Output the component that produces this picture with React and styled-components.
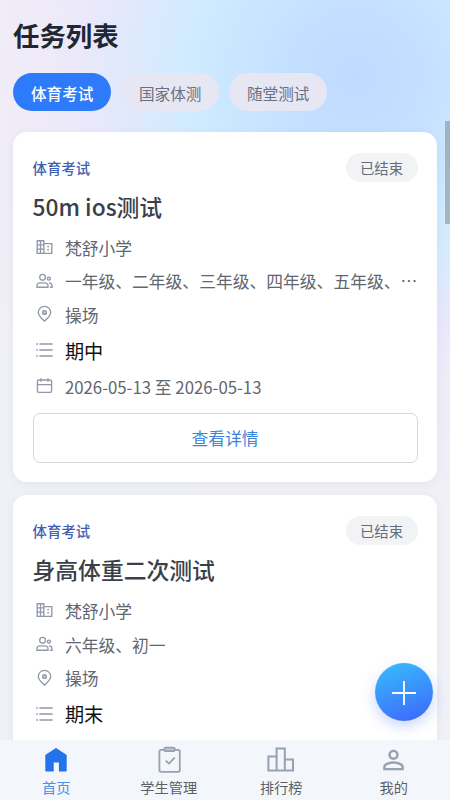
import styled, { createGlobalStyle } from "styled-components";
import { MdPersonOutline } from "react-icons/md";

const tabs = ["体育考试", "国家体测", "随堂测试"];

const tasks = [
  {
    id: 1,
    category: "体育考试",
    status: "已结束",
    title: "50m ios测试",
    school: "梵舒小学",
    grades: "一年级、二年级、三年级、四年级、五年级、…",
    place: "操场",
    period: "期中",
    date: "2026-05-13 至 2026-05-13",
  },
  {
    id: 2,
    category: "体育考试",
    status: "已结束",
    title: "身高体重二次测试",
    school: "梵舒小学",
    grades: "六年级、初一",
    place: "操场",
    period: "期末",
    date: "2026-05-13 至 2026-05-13",
  },
];

const SchoolIcon = () => (
  <LineIcon viewBox="0 0 19 18">
    <path d="M2.2 2.7h6.6v12.6H2.2zM8.8 5.6h8v9.7h-8M5.5 2.7v12.6M2.2 6.9h6.6M2.2 11.1h6.6" />
    <path d="M12.2 8.6h1.8M12.2 11.8h1.8" />
  </LineIcon>
);

const PeopleIcon = () => (
  <LineIcon viewBox="0 0 19 18">
    <circle cx="7.6" cy="5.3" r="2.9" />
    <path d="M2 15.2v-1.4c0-2 1.5-3 3.4-3h4.2c2 0 3.4 1 3.4 3v1.4z" />
    <circle cx="13.9" cy="6.6" r="1.5" />
    <path d="M14 10.9c1.9.2 3 1.2 3 2.9v1.4h-2" />
  </LineIcon>
);

const PinIcon = () => (
  <LineIcon viewBox="0 0 19 18">
    <path d="M9.5 16.2C6.2 13.2 3.3 10.6 3.3 7.5a6.2 6.2 0 0 1 12.4 0c0 3.1-2.9 5.7-6.2 8.7z" />
    <circle cx="9.5" cy="7.5" r="1.9" fill="#c9cdd6" />
  </LineIcon>
);

const ListIcon = () => (
  <LineIcon viewBox="0 0 19 18">
    <path d="M1.2 3h1.6M4.4 3h13.2M1.2 9h1.6M4.4 9h13.2M1.2 15h1.6M4.4 15h13.2" />
  </LineIcon>
);

const CalendarIcon = () => (
  <LineIcon viewBox="0 0 19 18">
    <rect x="2.4" y="3" width="14.2" height="12.4" rx="1.6" />
    <path d="M2.4 7.6h14.2M5.9 1.3v3.4M13 1.3v3.4" />
  </LineIcon>
);

const HomeIcon = () => (
  <svg width="32" height="32" viewBox="0 0 32 32" fill="#2173ec">
    <path d="M16 4 26 10.4a1.4 1.4 0 0 1 .7 1.2v15a.9.9 0 0 1-.9.9h-6.9v-9h-5.2v9H6.2a.9.9 0 0 1-.9-.9v-15a1.4 1.4 0 0 1 .7-1.2z" />
  </svg>
);

const ClipboardIcon = () => (
  <svg width="32" height="32" viewBox="0 0 32 32" fill="none" stroke="#98a1b3" strokeWidth="1.8">
    <rect x="6.4" y="5.8" width="20.4" height="22" rx="1.8" />
    <rect x="11.4" y="3.6" width="10.4" height="3.6" rx="1.4" fill="#c3c9d4" />
    <path d="m12.8 16.8 3.2 2.8 5.8-6" />
  </svg>
);

const RankIcon = () => (
  <svg width="32" height="32" viewBox="0 0 32 32" fill="none" stroke="#98a1b3" strokeWidth="2">
    <path d="M3.4 12.6h8.2v14H3.4zM11.6 4.6h8.2v22h-8.2zM19.8 15.6h8.2v11h-8.2z" />
  </svg>
);

const TaskCard = ({ task }) => {
  return (
    <Card>
      <CardHead>
        <Category>{task.category}</Category>
        <Status>{task.status}</Status>
      </CardHead>
      <TaskTitle>{task.title}</TaskTitle>
      <Info>
        <SchoolIcon />
        <span>{task.school}</span>
      </Info>
      <Info>
        <PeopleIcon />
        <span>{task.grades}</span>
      </Info>
      <Info>
        <PinIcon />
        <span>{task.place}</span>
      </Info>
      <Info $large>
        <ListIcon />
        <span>{task.period}</span>
      </Info>
      <Info>
        <CalendarIcon />
        <span>{task.date}</span>
      </Info>
      <DetailButton>查看详情</DetailButton>
    </Card>
  );
};

const App = () => {
  return (
    <>
      <GlobalStyle />
      <Page lang="zh-CN">
        <Content>
          <Heading>任务列表</Heading>
          <Tabs>
            {tabs.map((tab, index) => (
              <Tab key={tab} $active={index === 0}>
                {tab}
              </Tab>
            ))}
          </Tabs>
          <TaskList>
            {tasks.map((task) => (
              <TaskCard key={task.id} task={task} />
            ))}
          </TaskList>
        </Content>
        <NavBar>
          <NavItem $active>
            <HomeIcon />
            <span>首页</span>
          </NavItem>
          <NavItem>
            <ClipboardIcon />
            <span>学生管理</span>
          </NavItem>
          <NavItem>
            <RankIcon />
            <span>排行榜</span>
          </NavItem>
          <NavItem>
            <MdPersonOutline size={31} />
            <span>我的</span>
          </NavItem>
        </NavBar>
        <AddButton aria-label="新增">
          <svg width="26" height="26" viewBox="0 0 26 26" stroke="#fff" strokeWidth="1.8">
            <path d="M13 1v24M1 13h24" />
          </svg>
        </AddButton>
        <ScrollThumb />
      </Page>
    </>
  );
};

const GlobalStyle = createGlobalStyle`
  * {
    box-sizing: border-box;
  }

  body {
    margin: 0;
    overflow: hidden;
    font-family: "Noto Sans CJK SC", sans-serif;
  }

  button {
    font-family: inherit;
    border: none;
    padding: 0;
  }
`;

const Page = styled.div`
  position: relative;
  display: flex;
  flex-direction: column;
  width: 450px;
  height: 800px;
  overflow: hidden;
  background: radial-gradient(
    circle at 355px 75px,
    #bfdaff 0,
    #c4e0ff 70px,
    #cfebff 165px,
    #e9e8fb 265px,
    #efebf8 320px,
    #f0f0f7 440px
  );
`;

const Content = styled.div`
  flex: 1;
  min-height: 0;
  overflow: hidden;
  padding: 16px 13px 0;
`;

const Heading = styled.h1`
  margin: 0;
  font-size: 26.4px;
  font-weight: 700;
  line-height: 37px;
  color: #1f2733;
`;

const Tabs = styled.div`
  display: flex;
  gap: 9.6px;
  margin-top: 20px;
`;

const Tab = styled.button`
  width: 98.4px;
  height: 38px;
  padding-top: 1px;
  border-radius: 19px;
  font-size: 15.6px;
  font-weight: ${({ $active }) => ($active ? 500 : 400)};
  color: ${({ $active }) => ($active ? "#fff" : "#6b7080")};
  background-color: ${({ $active }) => ($active ? "#2d7bfb" : "#e6e7f3")};
`;

const TaskList = styled.div`
  display: flex;
  flex-direction: column;
  gap: 13.4px;
  margin-top: 21px;
`;

const Card = styled.div`
  padding: 20px 19.5px 19px;
  border-radius: 14px;
  background-color: #fff;
  box-shadow: 0 2px 10px rgba(60, 70, 120, 0.06);
`;

const CardHead = styled.div`
  display: flex;
  justify-content: space-between;
  align-items: center;
  height: 31px;
`;

const Category = styled.span`
  font-size: 14.4px;
  font-weight: 500;
  color: #405fb4;
`;

const Status = styled.span`
  padding: 0 14.4px;
  border-radius: 15px;
  font-size: 14.4px;
  line-height: 29px;
  color: #666b7a;
  background-color: #f2f3f5;
`;

const TaskTitle = styled.h2`
  margin: 8px 0;
  font-size: 22.8px;
  font-weight: 500;
  line-height: 32px;
  color: #3b3f4a;
`;

const Info = styled.div`
  display: flex;
  align-items: center;
  gap: 11.4px;
  height: ${({ $large }) => ($large ? "38.4px" : "33.6px")};
  padding-left: 2px;
  font-size: ${({ $large }) => ($large ? "19.2px" : "16.8px")};
  color: ${({ $large }) => ($large ? "#111" : "#62666f")};
  white-space: nowrap;
`;

const LineIcon = styled.svg`
  flex-shrink: 0;
  width: 19px;
  height: 18px;
  margin-bottom: 1px;
  fill: none;
  stroke: #9298a9;
  stroke-width: 1.35;
`;

const DetailButton = styled.button`
  display: block;
  width: 100%;
  height: 50px;
  margin-top: 9px;
  border: 1px solid #d6d7db;
  border-radius: 7px;
  font-size: 16.8px;
  color: #3d84d8;
  background-color: #fff;
`;

const NavBar = styled.nav`
  display: flex;
  flex-shrink: 0;
  height: 60px;
  background-color: #f3f6fa;
`;

const NavItem = styled.div`
  display: flex;
  flex: 1;
  flex-direction: column;
  align-items: center;
  padding-top: 3.5px;
  font-size: 14.2px;
  line-height: 20px;
  color: ${({ $active }) => ($active ? "#4a8fe8" : "#5c5f66")};

  svg {
    height: 32px;
    color: #98a1b3;
  }

  span {
    margin-top: 1px;
  }
`;

const AddButton = styled.button`
  position: absolute;
  right: 17px;
  bottom: 79px;
  display: flex;
  justify-content: center;
  align-items: center;
  width: 58px;
  height: 58px;
  padding-top: 2px;
  border-radius: 50%;
  background: linear-gradient(160deg, #38b6fc 10%, #3d6dfb 90%);
  box-shadow: 0 5px 14px rgba(61, 109, 251, 0.28);
`;

const ScrollThumb = styled.div`
  position: absolute;
  top: 121px;
  right: 0;
  width: 5px;
  height: 103px;
  background-color: rgba(128, 128, 128, 0.5);
`;

export default App;
